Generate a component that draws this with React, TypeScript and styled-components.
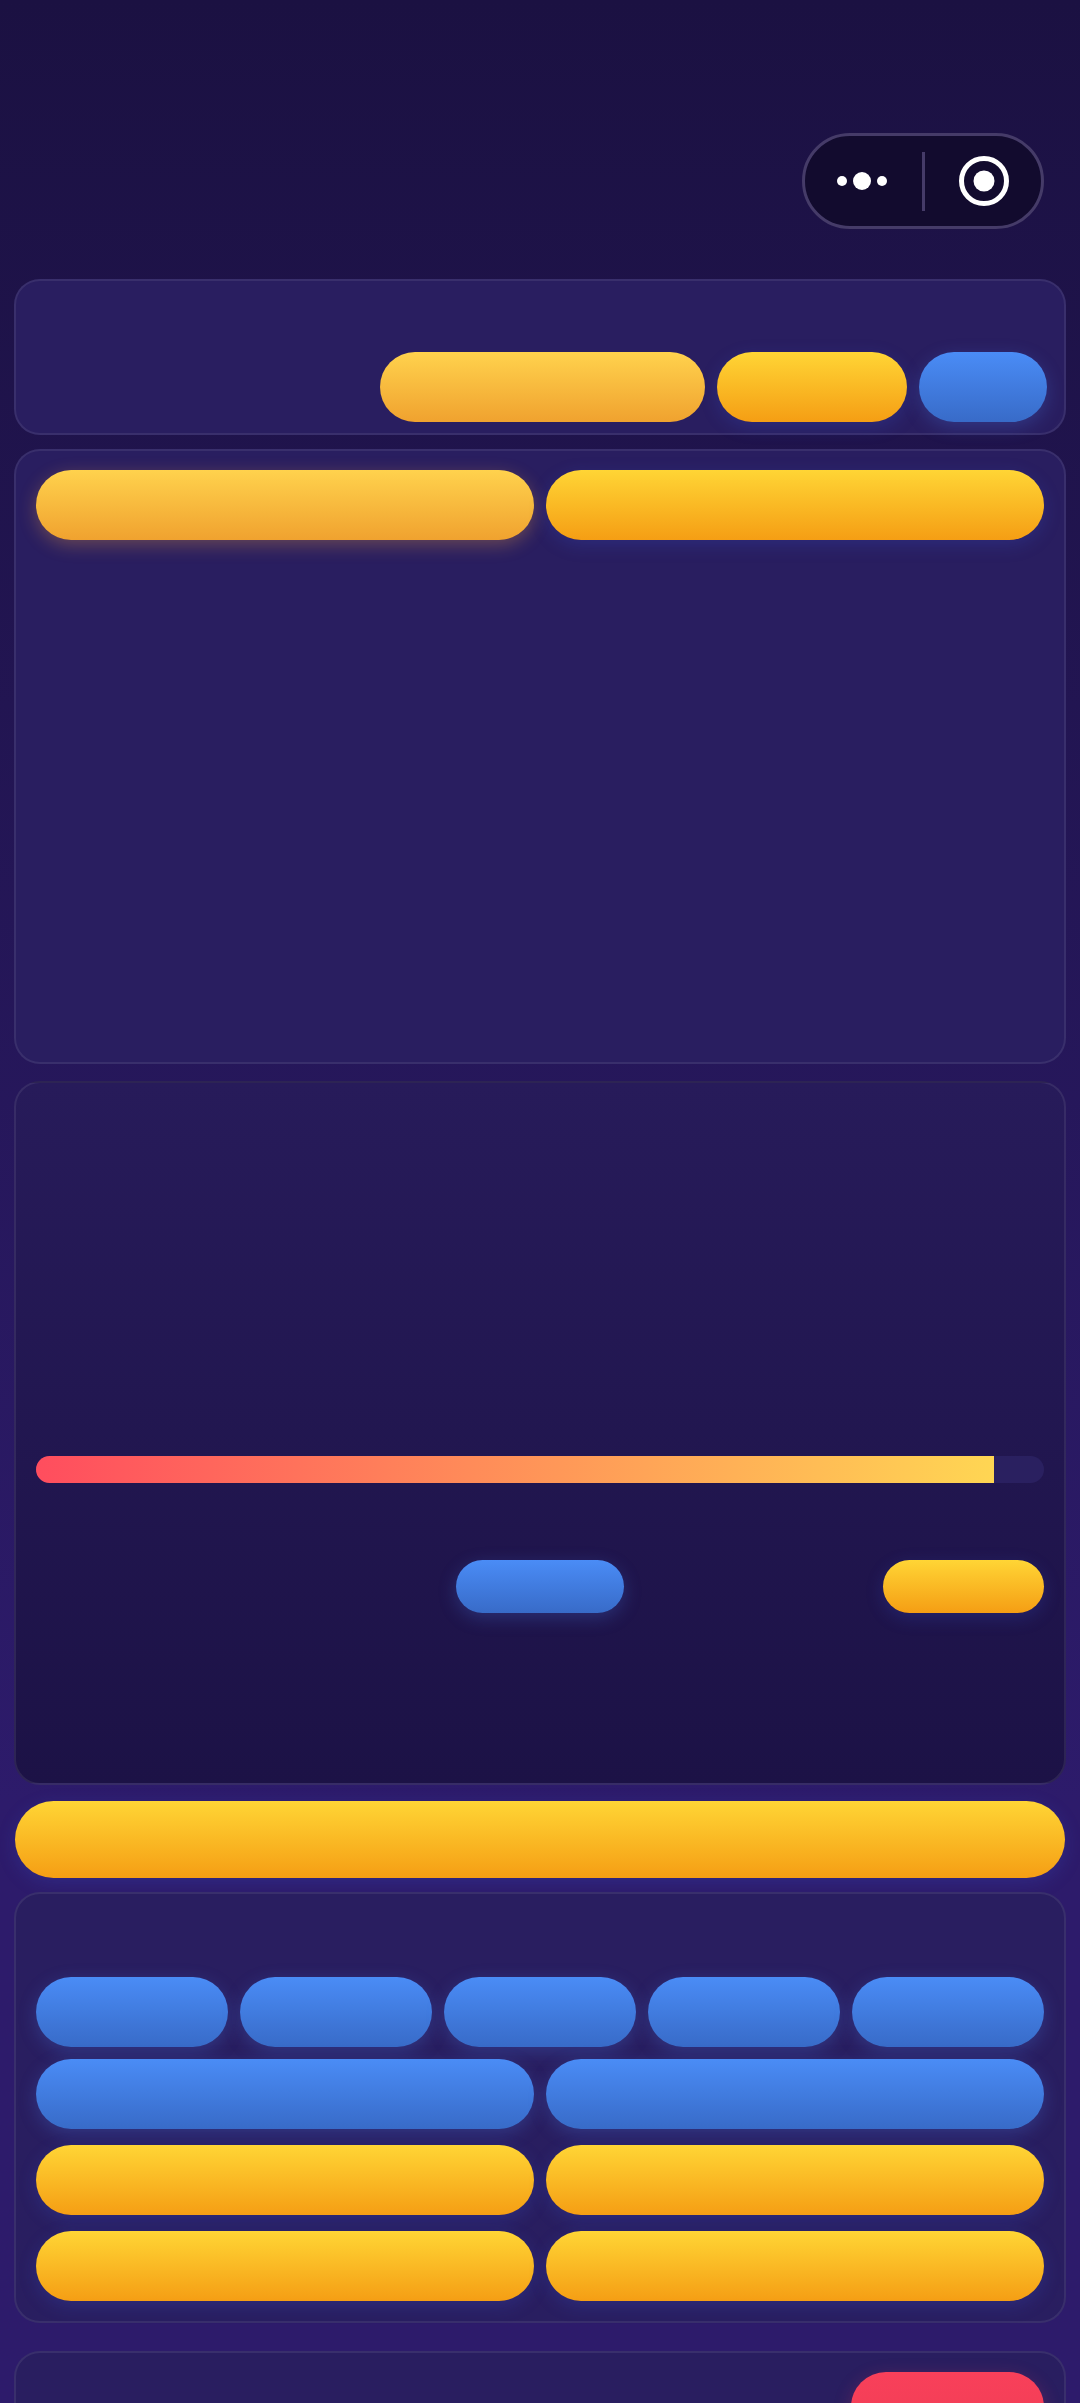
import styled, { createGlobalStyle } from "styled-components";

const GlobalStyle = createGlobalStyle`
  html, body {
    margin: 0;
    padding: 0;
    background: #2d1b69;
    font-family: "Inter", "Liberation Sans", sans-serif;
  }
  * {
    box-sizing: border-box;
  }
`;

export default function App() {
  return (
    <Page>
      <GlobalStyle />
      <Header>
        <Capsule>
          <CapsuleSlot>
            <svg width="56" height="22" viewBox="0 0 56 22">
              <circle cx="7" cy="11" r="5" fill="#fff" />
              <circle cx="27" cy="11" r="9" fill="#fff" />
              <circle cx="47" cy="11" r="5" fill="#fff" />
            </svg>
          </CapsuleSlot>
          <CapsuleDivider />
          <CapsuleSlot>
            <svg width="54" height="54" viewBox="0 0 54 54">
              <circle cx="28" cy="27" r="22.5" fill="none" stroke="#fff" strokeWidth="5" />
              <circle cx="28" cy="27" r="10.5" fill="#fff" />
            </svg>
          </CapsuleSlot>
        </Capsule>
      </Header>

      <TopCard>
        <ActionRow>
          <Pill $tone="soft" $width={325} />
          <Pill $tone="gold" $width={190} />
          <Pill $tone="blue" $width={128} />
        </ActionRow>
      </TopCard>

      <TabsCard>
        <Grid $cols={2}>
          <Pill $tone="softGlow" />
          <Pill $tone="gold" />
        </Grid>
      </TabsCard>

      <PlayerCard>
        <Track>
          <TrackFill $percent={95} />
        </Track>
        <Controls>
          <span />
          <SmallPill $tone="blue" />
          <SmallPill $tone="gold" $end />
        </Controls>
      </PlayerCard>

      <WideButton />

      <OptionsCard>
        <Grid $cols={5}>
          <Pill $tone="blue" />
          <Pill $tone="blue" />
          <Pill $tone="blue" />
          <Pill $tone="blue" />
          <Pill $tone="blue" />
        </Grid>
        <Grid $cols={2} $top={12}>
          <Pill $tone="blue" />
          <Pill $tone="blue" />
        </Grid>
        <Grid $cols={2} $top={16}>
          <Pill $tone="gold" />
          <Pill $tone="gold" />
        </Grid>
        <Grid $cols={2} $top={16}>
          <Pill $tone="gold" />
          <Pill $tone="gold" />
        </Grid>
      </OptionsCard>

      <BottomCard>
        <Pill $tone="red" $width={193} />
      </BottomCard>
    </Page>
  );
}

type Tone = "gold" | "soft" | "softGlow" | "blue" | "red";

const toneStyles: Record<Tone, string> = {
  gold: `
    background: linear-gradient(180deg, #ffd535 0%, #f59e14 100%);
    box-shadow: 0 5px 18px rgba(59, 90, 220, 0.22);
  `,
  soft: `
    background: linear-gradient(180deg, #ffd24d 0%, #f0a22f 100%);
  `,
  softGlow: `
    background: linear-gradient(180deg, #ffd24d 0%, #f0a22f 100%);
    box-shadow: 0 5px 18px rgba(255, 170, 60, 0.3);
  `,
  blue: `
    background: linear-gradient(180deg, #4a8cf6 0%, #386bc8 100%);
    box-shadow: 0 5px 18px rgba(74, 130, 244, 0.25);
  `,
  red: `
    background: linear-gradient(180deg, #f9405a 0%, #ee3d55 100%);
    box-shadow: 0 5px 18px rgba(244, 63, 90, 0.25);
  `,
};

const Page = styled.div`
  height: 2403px;
  overflow: hidden;
  display: flex;
  flex-direction: column;
  padding: 0 14px;
  background: linear-gradient(180deg, #1b1142 0%, #2d1b6b 75%);
`;

const Header = styled.header`
  flex: none;
  height: 279px;
  display: flex;
  justify-content: flex-end;
  padding: 133px 22px 0 0;
`;

const Capsule = styled.div`
  width: 242px;
  height: 96px;
  display: flex;
  align-items: center;
  border: 3px solid #453b68;
  border-radius: 48px;
  background: #120b2e;
`;

const CapsuleSlot = styled.div`
  flex: 1;
  display: flex;
  justify-content: center;
  align-items: center;
`;

const CapsuleDivider = styled.div`
  flex: none;
  width: 3px;
  height: 59px;
  background: #453b68;
`;

const Card = styled.section`
  flex: none;
  border: 2px solid rgba(255, 255, 255, 0.08);
  border-radius: 26px;
  background: #291e60;
`;

const TopCard = styled(Card)`
  height: 156px;
  margin-bottom: 14px;
  padding: 71px 17px 0 0;
`;

const TabsCard = styled(Card)`
  height: 615px;
  margin-bottom: 17px;
  padding: 19px 20px;
`;

const PlayerCard = styled(Card)`
  height: 704px;
  margin-bottom: 16px;
  padding: 373px 20px 0;
  background: linear-gradient(180deg, #271b5a 0%, #1c1246 100%);
`;

const OptionsCard = styled(Card)`
  height: 431px;
  margin-bottom: 28px;
  padding: 83px 20px 0;
`;

const BottomCard = styled(Card)`
  height: 260px;
  display: flex;
  justify-content: flex-end;
  padding: 19px 20px;
`;

const ActionRow = styled.div`
  display: flex;
  justify-content: flex-end;
  gap: 12px;
`;

const Grid = styled.div<{ $cols: number; $top?: number }>`
  display: grid;
  grid-template-columns: repeat(${(p) => p.$cols}, 1fr);
  gap: 12px;
  margin-top: ${(p) => p.$top ?? 0}px;
`;

const Pill = styled.div<{ $tone: Tone; $width?: number }>`
  height: 70px;
  width: ${(p) => (p.$width ? `${p.$width}px` : "auto")};
  flex: none;
  border-radius: 35px;
  ${(p) => toneStyles[p.$tone]}
`;

const Track = styled.div`
  height: 27px;
  border-radius: 14px;
  background: #2a2060;
  overflow: hidden;
`;

const TrackFill = styled.div<{ $percent: number }>`
  height: 100%;
  width: ${(p) => p.$percent}%;
  background: linear-gradient(90deg, #ff4d5e 0%, #ffd653 100%);
`;

const Controls = styled.div`
  display: grid;
  grid-template-columns: 1fr 168px 1fr;
  margin-top: 77px;
`;

const SmallPill = styled.div<{ $tone: Tone; $end?: boolean }>`
  height: 53px;
  width: ${(p) => (p.$end ? "161px" : "auto")};
  justify-self: ${(p) => (p.$end ? "end" : "stretch")};
  border-radius: 27px;
  ${(p) => toneStyles[p.$tone]}
`;

const WideButton = styled.div`
  flex: none;
  height: 77px;
  margin: 0 1px 14px;
  border-radius: 39px;
  ${toneStyles.gold}
`;
